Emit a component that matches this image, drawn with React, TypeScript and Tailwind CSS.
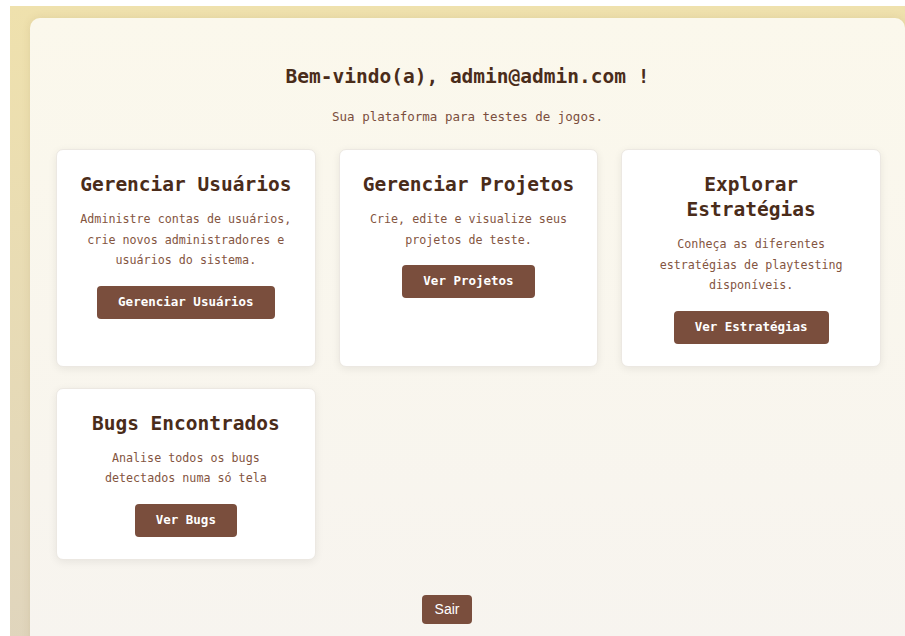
import React from 'react';

interface Action {
  title: string;
  text: string;
  button: string;
}

const ACTIONS: Action[] = [
  {
    title: 'Gerenciar Usuários',
    text: 'Administre contas de usuários, crie novos administradores e usuários do sistema.',
    button: 'Gerenciar Usuários',
  },
  {
    title: 'Gerenciar Projetos',
    text: 'Crie, edite e visualize seus projetos de teste.',
    button: 'Ver Projetos',
  },
  {
    title: 'Explorar Estratégias',
    text: 'Conheça as diferentes estratégias de playtesting disponíveis.',
    button: 'Ver Estratégias',
  },
  {
    title: 'Bugs Encontrados',
    text: 'Analise todos os bugs detectados numa só tela',
    button: 'Ver Bugs',
  },
];

const MONO = 'font-["DejaVu_Sans_Mono","Liberation_Mono",monospace]';

export default function App() {
  return (
    <div className="h-[636px] w-[905px] overflow-hidden bg-white">
      <div className="ml-[10px] mt-[6px] w-[895px] min-h-[630px] bg-gradient-to-b from-[#efe1ad] to-[#e0d5bd] pl-5 pt-3">
        <main className={`w-[875px] min-h-[618px] rounded-tl-[10px] rounded-tr-[10px] bg-gradient-to-b from-[#fbf8ec] to-[#f7f4ef] px-[26px] pt-[46px] pb-6 shadow-[0_0_8px_rgba(120,90,40,0.12)] ${MONO}`}>
          {/* Header */}
          <div className="text-center">
            <h1 className="text-[19.5px] leading-[25px] font-bold text-[#4a2c1a]">Bem-vindo(a), admin@admin.com !</h1>
            <p className="mt-[18px] text-[12.5px] leading-[20px] text-[#7a4e3d]">Sua plataforma para testes de jogos.</p>
          </div>

          {/* Cards */}
          <div className="mt-[22px] grid grid-cols-3 gap-x-[23px] gap-y-[21px] w-[825px]">
            {ACTIONS.map(a => (
              <ActionCard key={a.title} {...a} />
            ))}
          </div>

          <div className="mt-[35px] flex">
            <button className="ml-[366px] h-[29px] w-[50px] rounded-[4px] bg-[#7a4e3d] font-['Liberation_Sans',Arial,sans-serif] text-[14px] text-white">Sair</button>
          </div>
        </main>
      </div>
    </div>
  );
}

function ActionCard({ title, text, button }: Action) {
  return (
    <div className="flex flex-col items-center rounded-[7px] border border-[#ece8e2] bg-white px-5 py-[22px] text-center shadow-[0_2px_8px_rgba(0,0,0,0.07)]">
      <h2 className="text-[19.5px] leading-[25px] font-bold text-[#4a2c1a]">{title}</h2>
      <p className="mt-[12px] text-[11.7px] leading-[20.5px] text-[#84553f]">{text}</p>
      <button className="mt-[15px] h-[33px] rounded-[4px] bg-[#7a4e3d] px-[21px] text-[12.5px] font-semibold text-white">{button}</button>
    </div>
  );
}
